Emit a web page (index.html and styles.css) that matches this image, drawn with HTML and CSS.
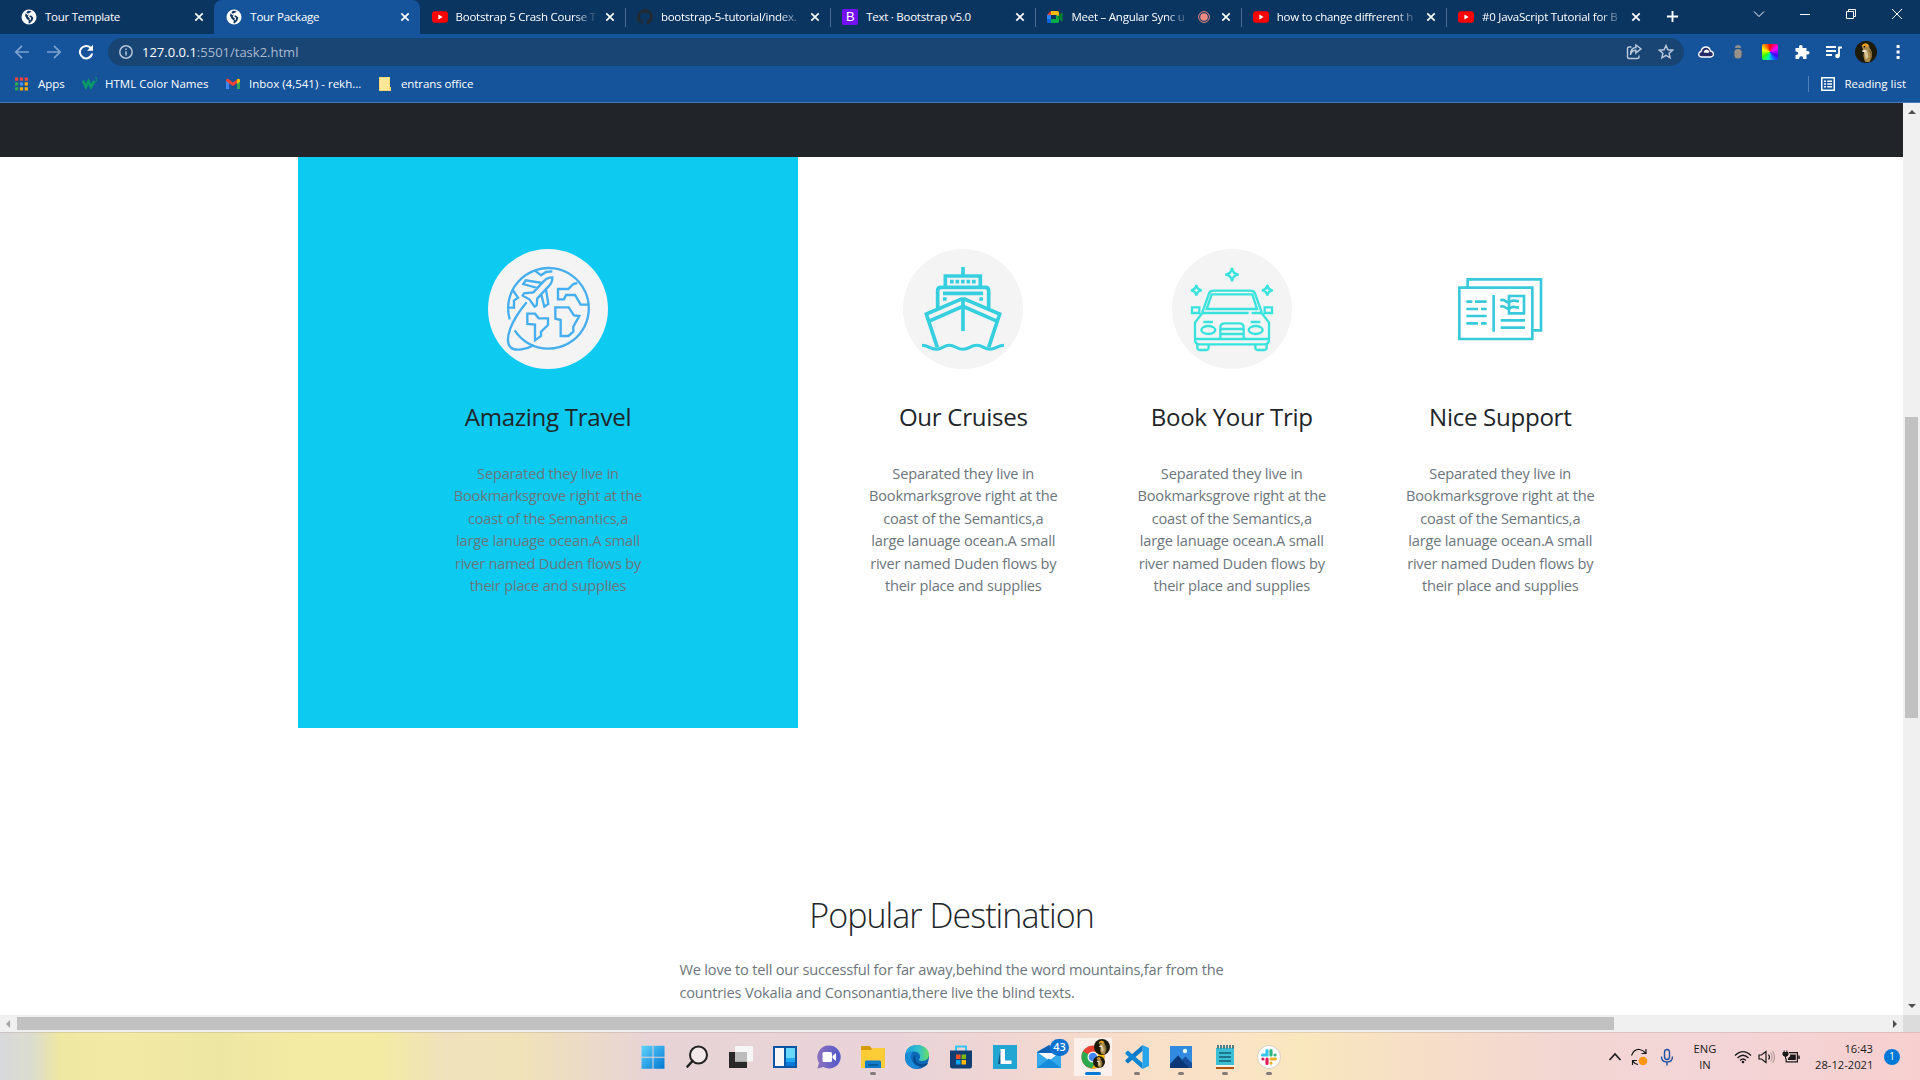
FILE: index.html
```html
<!DOCTYPE html>
<html lang="en">
<head>
<meta charset="utf-8">
<title>Tour Package</title>
<link rel="stylesheet" href="styles.css">
</head>
<body>
<svg class="defs" aria-hidden="true">
  <symbol id="close" viewBox="0 0 16 16"><path d="M4.300 4.300l7.400 7.400M11.700 4.300l-7.400 7.400" stroke="#fff" stroke-width="1.700"/></symbol>
  <symbol id="globe" viewBox="0 0 16 16"><circle cx="8" cy="8" r="7.500" fill="#fff"/><path d="M7 1.800l3.500.4-.8 2-2 .8-.5 1.600H10l2.300 2-.8 3-3 3-1-.5.3-2.600L5.600 9.800 4 6.500l1-3z" fill="#12365f"/><path d="M4.500 3l2 2.500 3-1.500-2 3.500 2 1.500-.5 2" fill="none" stroke="#fff" stroke-width="1.200"/></symbol>
  <symbol id="youtube" viewBox="0 0 16 16"><rect y="2.300" width="16" height="11.400" rx="3" fill="#f00"/><path d="M6.400 5.600v4.800L10.600 8z" fill="#fff"/></symbol>
  <symbol id="bird" viewBox="0 0 22 22"><circle cx="11" cy="11" r="11" fill="#1c1a08"/><path d="M7 6q1-4 4.500-3.500 3 .5 3 4.500 3 3.500 2.500 8.500L14.500 21h-4Q7.500 16 9 11z" fill="#a98b4c"/><path d="M6.500 5q2-3.500 6-2l1 2.500-3.500.5z" fill="#f1a21c"/><path d="M8.500 8.500l3.500 1 1.500 6-2.500 3-1-4z" fill="#d9c79a"/><path d="M7 9.500l4-.5-.5 1.800-3 .2z" fill="#f4f1e6"/><path d="M14.500 9q2.500 4 1.500 9" stroke="#6d5728" fill="none"/><circle cx="9.500" cy="5.600" r=".9" fill="#111"/></symbol>
</svg>

<header class="chrome">
  <div class="tabstrip">
    <div class="tab"><svg class="fav"><use href="#globe"/></svg><span class="label">Tour Template</span><svg class="x"><use href="#close"/></svg></div>
    <div class="tab active"><svg class="fav"><use href="#globe"/></svg><span class="label">Tour Package</span><svg class="x"><use href="#close"/></svg></div>
    <div class="tab"><svg class="fav"><use href="#youtube"/></svg><span class="label fade">Bootstrap 5 Crash Course T</span><svg class="x"><use href="#close"/></svg></div>
    <div class="tab sep"><svg class="fav" viewBox="0 0 16 16"><path fill="#24292e" d="M8 0a8 8 0 0 0-2.500 15.600c.4.100.5-.2.5-.4v-1.400c-2.200.5-2.700-1-2.700-1-.4-.9-.9-1.200-.9-1.200-.7-.5.100-.5.100-.5.800.1 1.200.8 1.200.8.700 1.200 1.900.9 2.300.7.100-.5.300-.9.500-1.100-1.800-.2-3.600-.9-3.600-4 0-.9.300-1.600.8-2.100-.1-.2-.4-1 .1-2.100 0 0 .7-.2 2.200.8a7.500 7.500 0 0 1 4 0c1.500-1 2.200-.8 2.200-.8.4 1.100.2 1.900.1 2.100.5.6.8 1.300.8 2.100 0 3.100-1.900 3.700-3.700 3.900.3.300.6.8.6 1.500v2.200c0 .2.100.5.500.4A8 8 0 0 0 8 0z"/></svg><span class="label fade">bootstrap-5-tutorial/index.</span><svg class="x"><use href="#close"/></svg></div>
    <div class="tab sep"><span class="fav bs">B</span><span class="label">Text · Bootstrap v5.0</span><svg class="x"><use href="#close"/></svg></div>
    <div class="tab sep"><svg class="fav" viewBox="0 0 16 16"><path d="M4 2v4H0z" fill="#ea4335"/><path d="M0 6h4v4H0z" fill="#2684fc"/><path d="M0 10h4v4H1.200Q0 14 0 12.800z" fill="#0066da"/><path d="M4 2h6.500Q12 2 12 3.500V8L9 6H4z" fill="#ffba00"/><path d="M4 10h5V6l3 2v4.500q0 1.500-1.500 1.500H4z" fill="#00ac47"/><path d="M12 6l2.500-2.200Q15.500 3.200 15.500 4v8q0 .8-1 .2L12 10l-1.500-2z" fill="#00832d"/></svg><span class="label fade">Meet – Angular Sync u</span><svg class="rec" viewBox="0 0 12 12"><circle cx="6" cy="6" r="5.400" fill="none" stroke="#f28b82"/><circle cx="6" cy="6" r="3.800" fill="#f28b82"/></svg><svg class="x"><use href="#close"/></svg></div>
    <div class="tab sep"><svg class="fav"><use href="#youtube"/></svg><span class="label fade">how to change diffrerent h</span><svg class="x"><use href="#close"/></svg></div>
    <div class="tab sep"><svg class="fav"><use href="#youtube"/></svg><span class="label fade">#0 JavaScript Tutorial for B</span><svg class="x"><use href="#close"/></svg></div>
    <div class="newtab"><svg viewBox="0 0 14 14"><path d="M7 1v12M1 7h12" stroke="#fff" stroke-width="2"/></svg></div>
    <div class="winbtns">
      <svg viewBox="0 0 12 12"><path d="M1 3.500l5 5 5-5" class="wl"/></svg>
      <svg viewBox="0 0 12 12"><path d="M1 6.500h10" class="wl"/></svg>
      <svg viewBox="0 0 12 12"><path d="M1.500 3.500h7v7h-7zM3.500 3.500v-2h7v7h-2" class="wl"/></svg>
      <svg viewBox="0 0 12 12"><path d="M1 1l10 10M11 1L1 11" class="wl"/></svg>
    </div>
  </div>

  <div class="toolbar">
    <svg class="nav dim" viewBox="0 0 16 16"><path d="M15 8H2M8 1.800L1.800 8 8 14.200"/></svg>
    <svg class="nav dim" viewBox="0 0 16 16"><path d="M1 8h13M8 1.800L14.200 8 8 14.200"/></svg>
    <svg class="nav" viewBox="0 0 16 16"><path d="M13.200 4.600A6.200 6.200 0 1 0 14.200 9.500"/><path d="M15 .800v6H9z" fill="#fff" stroke="none"/></svg>
    <div class="omnibox">
      <svg class="info" viewBox="0 0 14 14"><circle cx="7" cy="7" r="6.200"/><path d="M7 6.200v4.200M7 3.400v1.500"/></svg>
      <span class="url"><b>127.0.0.1</b>:5501/task2.html</span>
      <svg class="act" viewBox="0 0 16 16"><path d="M5.500 3H3Q1.500 3 1.500 4.500v8.500Q1.500 14.500 3 14.500h8.500q1.500 0 1.500-1.500v-1.500M4.500 11Q5 6.500 9.800 6.200V9L15 4.800 9.800 1v2.500Q4.500 4 4.500 11z"/></svg>
      <svg class="act" viewBox="0 0 16 16"><path d="M8 1.500l1.900 4.300 4.700.4-3.500 3.100 1 4.600L8 11.400l-4.100 2.500 1-4.600-3.500-3.100 4.700-.4z"/></svg>
    </div>
    <div class="exts">
      <svg viewBox="0 0 16 16"><path d="M3.500 13Q.5 12.500.7 10 1 8 3 7.500 4 3 8 3q3.500 0 4.500 4 3 .5 3 3.200 0 2.300-3 2.800z" fill="#262a66" stroke="#fff" stroke-width="1.300"/><path d="M5.500 8q1-2.500 3-2.500T11.500 8l-1 .8h-4z" fill="#fff"/></svg>
      <svg viewBox="0 0 16 16"><path d="M5 4q0-3 3-3t3 3z" fill="#8d8d8d"/><rect x="4.300" y="5" width="7.400" height="9.500" rx="3.500" fill="#989288"/><path d="M2.500 5L5 6.500M13.500 5L11 6.500M2 10h2.500M14 10h-2.500M3 14l2-1.500M13 14l-2-1.500" stroke="#3e5269"/></svg>
      <span class="wheel"></span>
      <svg viewBox="0 0 16 16"><path d="M1.500 4h3.700Q4.500 1 6.800 1T8.500 4H12.500v3.300Q15.500 6.500 15.500 8.800T12.500 10.300V15H9Q9.500 12.300 7.200 12.300T5.200 15H1.500v-3.900Q4.200 11.300 4.200 9.300T1.500 7.500z" fill="#fff"/></svg>
      <svg viewBox="0 0 16 16"><path d="M0 3h10M0 7h10M0 11h6M13 12V3.500h3" stroke="#fff" stroke-width="1.800" fill="none"/><circle cx="11.500" cy="12" r="2.300" fill="#fff"/></svg>
      <svg class="avatar"><use href="#bird"/></svg>
      <svg viewBox="0 0 16 16"><path d="M6.600 1h3v3h-3zM6.600 6.500h3v3h-3zM6.600 12h3v3h-3z" fill="#fff"/></svg>
    </div>
  </div>

  <div class="bookmarks">
    <span class="bm apps"><svg viewBox="0 0 14 14"><path d="M0 0h3.500v3.500H0zM5.200 0h3.500v3.500H5.200zM10.400 0h3.500v3.500h-3.500z" fill="#f4443b"/><path d="M0 5.200h3.500v3.500H0z" fill="#32a853"/><path d="M5.200 5.200h3.500v3.500H5.200z" fill="#4a8af4"/><path d="M10.400 5.200h3.500v3.500h-3.500z" fill="#fbad05"/><path d="M0 10.400h3.500v3.500H0z" fill="#32a853"/><path d="M5.200 10.400h3.500v3.500H5.200zM10.400 10.400h3.500v3.500h-3.500z" fill="#fbad05"/></svg>Apps</span>
    <span class="bm w3"><svg viewBox="0 0 16 14"><path d="M1 3.500l3 6.500 2.500-5.500L9 10l3.300-6" stroke="#0a9a6a" stroke-width="2.800" fill="none"/><path d="M12.500.800h2.600l-1.300 1.500q1.500.2 1 1.700-.8 1-2.300.2" stroke="#0a9a6a" stroke-width=".8" fill="none"/></svg>HTML Color Names</span>
    <span class="bm gm"><svg viewBox="0 0 14 14"><path d="M0 4v8h3V5.500z" fill="#4285f4"/><path d="M11 5.500V12h3V4z" fill="#34a853"/><path d="M0 4V2.800Q1 1 2.500 2L7 5.500 11.500 2l-.5 4-4 3.200L0 4z" fill="#ea4335"/><path d="M11 2.300Q13.500.8 14 3v1.500L11 7z" fill="#fbbc04"/></svg>Inbox (4,541) - rekh...</span>
    <span class="bm fo"><svg viewBox="0 0 12 14"><path d="M0 0h11v10h1v4H0z" fill="#f8d977"/><path d="M1 1h9v9.500L9 13H1z" fill="#ffe79a"/></svg>entrans office</span>
    <span class="bm reading"><svg viewBox="0 0 14 14"><path d="M.8.800h12.400v12.400H.800zM3 4.200h2M6.200 4.200H11M3 7h2M6.200 7H11M3 9.800h2M6.200 9.800H11" stroke="#fff" stroke-width="1.500" fill="none"/></svg>Reading list</span>
  </div>
</header>

<main class="viewport">
  <div class="page">
    <div class="darkband"></div>
    <section class="features">
      <article class="card lead">
        <svg class="pic disc" viewBox="144 57 360 360" stroke="#45aeef" stroke-width="7"><path d="M209 268A121 121 0 1 1 224 301M260 217C215 270 190 330 212 352C225 365 260 358 282 345"/><path d="M337 142Q322 142 313 152L280 187L252 190L248 197L268 208L284 230L290 226L292 205L325 170Q338 157 337 142ZM292 174L250 162L257 151L307 159M303 190L313 230L325 222L318 178"/><path d="M262 251H285L296 265H324V285L303 305V318L285 331V284L262 282ZM346 232H386L402 256L418 258L400 290V305L385 318H362V270L346 266ZM412 159L400 162L385 177H354V208H372L378 195H405L422 224H445M218 180L234 203L222 212V233H203M285 122L303 136L318 126L337 124"/></svg>
        <h2>Amazing Travel</h2>
        <p>Separated they live in<br>Bookmarksgrove right at the<br>coast of the Semantics,a<br>large lanuage ocean.A small<br>river named Duden flows by<br>their place and supplies</p>
      </article>
      <article class="card">
        <svg class="pic disc" viewBox="129 57 360 360" stroke="#36cfe0" stroke-width="11"><path d="M309 111V135M256 170V138H361V170M233 236V182Q233 172 243 172H376Q386 172 386 182V236M249 190H369M309 205L199 252L232 352M309 205L419 252L386 352M206 274L309 229L412 274M309 205V303"/><path d="M270 155H347" stroke-dasharray="11 5.500"/><path d="M249 207H260M358 207H369"/><path d="M186 346C206 346 210 358 228 358S250 346 268 346 290 358 309 358 330 346 350 346 372 358 390 358 412 346 432 346" stroke-width="9"/></svg>
        <h2>Our Cruises</h2>
        <p>Separated they live in<br>Bookmarksgrove right at the<br>coast of the Semantics,a<br>large lanuage ocean.A small<br>river named Duden flows by<br>their place and supplies</p>
      </article>
      <article class="card">
        <svg class="pic disc" viewBox="933 57 360 360" stroke="#37e3dc" stroke-width="7"><path d="M1024 247L1044 190Q1048 182 1058 182H1168Q1178 182 1182 190L1202 247M1052 193H1174L1188 237H1037ZM1022 249H1163M1172 249H1204M1024 249L1002 278V328Q1002 343 1014 343H1212Q1224 343 1224 328V278L1202 249M1002 327H1224M1009 343V352Q1009 360 1016 360H1036Q1043 360 1043 352V343M1183 343V352Q1183 360 1190 360H1210Q1217 360 1217 352V343M993 232H1015V249H993ZM1211 232H1233V249H1211ZM1027 276H1056M1169 276H1198M1078 327V292Q1078 280 1092 280H1134Q1148 280 1148 292V327M1078 297H1148M1078 312H1148"/><ellipse cx="1042" cy="300" rx="21" ry="12"/><ellipse cx="1184" cy="300" rx="21" ry="12"/><path d="M1113 114Q1115 132 1133 134Q1115 136 1113 154Q1111 136 1093 134Q1111 132 1113 114ZM1006 165Q1008 179 1022 181Q1008 183 1006 197Q1004 183 990 181Q1004 179 1006 165ZM1219 165Q1221 179 1235 181Q1221 183 1219 197Q1217 183 1203 181Q1217 179 1219 165Z"/></svg>
        <h2>Book Your Trip</h2>
        <p>Separated they live in<br>Bookmarksgrove right at the<br>coast of the Semantics,a<br>large lanuage ocean.A small<br>river named Duden flows by<br>their place and supplies</p>
      </article>
      <article class="card">
        <svg class="pic" viewBox="240 57 360 360" stroke="#38c9da" stroke-width="8"><path d="M323 171V148H543V301H520M298 173H517V327H298ZM401 195V305M319 215H337M345 215H380M319 237H354M363 237H380M319 258H380M319 280H354M363 280H380M447 198H492V250H447ZM422 271H495M422 293H495"/><path d="M421 212Q430 207 436 213T450 215 463 212 477 214M421 231Q430 226 436 232T450 234 463 231 477 233"/></svg>
        <h2>Nice Support</h2>
        <p>Separated they live in<br>Bookmarksgrove right at the<br>coast of the Semantics,a<br>large lanuage ocean.A small<br>river named Duden flows by<br>their place and supplies</p>
      </article>
    </section>
    <section class="popular">
      <h1>Popular Destination</h1>
      <p>We love to tell our successful for far away,behind the word mountains,far from the<br>countries Vokalia and Consonantia,there live the blind texts.</p>
    </section>
  </div>
  <div class="vbar"><i class="up"></i><span class="vthumb"></span><i class="down"></i></div>
  <div class="hbar"><i class="left"></i><span class="hthumb"></span><i class="right"></i></div>
  <div class="corner"></div>
</main>

<footer class="taskbar">
  <div class="apps-row">
    <span class="app"><svg viewBox="0 0 24 24"><defs><linearGradient id="win" x2="1" y2="1"><stop stop-color="#5fd3fb"/><stop offset="1" stop-color="#0377d4"/></linearGradient></defs><path d="M.5.800h11v11H.500zM12.500.800h11v11h-11zM.5 12.800h11v11H.500zM12.500 12.800h11v11h-11z" fill="url(#win)"/></svg></span>
    <span class="app"><svg viewBox="0 0 24 24"><circle cx="13.500" cy="10" r="8.500" fill="#f3e8ea" stroke="#222" stroke-width="2"/><path d="M7.500 16L2.500 21.500" stroke="#222" stroke-width="2.600" stroke-linecap="round"/></svg></span>
    <span class="app"><svg viewBox="0 0 24 24"><path d="M0 7h18v16H0z" fill="#292929"/><path d="M6 1h18v15.500H6z" fill="#f6f6f6"/><path d="M6 7h12v9.500H6z" fill="#bdbdbd"/></svg></span>
    <span class="app"><svg viewBox="0 0 24 24"><path d="M0 1h24v22H0z" fill="#0a56a4"/><path d="M2 3h9v18H2z" fill="#f6f6f6"/><path d="M13 3h9v10h-9z" fill="#69d8ff"/><path d="M13 13h9v4h-9z" fill="#20a8f4"/><path d="M13 17h9v4h-9z" fill="#0a78d8"/></svg></span>
    <span class="app"><svg viewBox="0 0 24 24"><defs><linearGradient id="chat" x1="0" x2="1"><stop stop-color="#8d72bd"/><stop offset="1" stop-color="#5059c9"/></linearGradient></defs><path d="M12 .500a11.500 11.500 0 1 1-5.500 21.500L.5 23.500l1.500-5.500A11.500 11.500 0 0 1 12 .500z" fill="url(#chat)"/><rect x="5.500" y="7" width="9.500" height="10" rx="1.500" fill="#fff"/><path d="M15.500 11l3.500-3v8l-3.500-3z" fill="#fff"/></svg></span>
    <span class="app run"><svg viewBox="0 0 24 24"><path d="M0 2q0-1 1-1h8l2 3v4H0z" fill="#d79a0a"/><path d="M0 5h10l2-2h12v19q0 1-1 1H1q-1 0-1-1z" fill="#fccb38"/><path d="M4 23v-6q0-1.500 1.500-1.500h13Q20 15.500 20 17v6z" fill="#0f7bc9"/><path d="M7 19h10v2H7z" fill="#075a9c"/></svg></span>
    <span class="app"><svg viewBox="0 0 24 24"><defs><linearGradient id="edge" x1="0" x2="1"><stop stop-color="#1a9ee0"/><stop offset=".6" stop-color="#35c1c9"/><stop offset="1" stop-color="#6ae05e"/></linearGradient></defs><circle cx="12" cy="12" r="12" fill="#0c68b8"/><path d="M0 11Q1 0 12 0q11 .5 12 9.500 0 6.500-7 6.500-3.500 0-3-2 1.500-1 1-3.500Q13.500 6.500 8.500 6.500 2 7 0 11z" fill="url(#edge)"/><path d="M0 12Q2 6.500 8 6.500q-3 4-1.500 8.500 2 5.500 8.500 6.500-3 3-7 1.500Q0 20 0 12z" fill="#188ad6"/><path d="M11 10q-2 4 1 7.500 4 3.500 10.500.5l.5.500Q20 23 15 21.500 7 19 8.500 12z" fill="#064a8c"/></svg></span>
    <span class="app"><svg viewBox="0 0 24 24"><path d="M7 6V1.500h10V6" fill="none" stroke="#35c4f3" stroke-width="2"/><path d="M1 5.500h22V21q0 2.500-2.500 2.500h-17Q1 23.500 1 21z" fill="#123f73"/><path d="M7 9.500h4.500V14H7z" fill="#f25022"/><path d="M12.500 9.500H17V14h-4.500z" fill="#7fba00"/><path d="M7 15h4.500v4.500H7z" fill="#00a4ef"/><path d="M12.500 15H17v4.500h-4.500z" fill="#ffb900"/></svg></span>
    <span class="app"><svg viewBox="0 0 24 24"><path d="M0 0h24v24H0z" fill="#21a5d3"/><path d="M5 19L7.500 4v11.500L18 19z" fill="#10507c"/><path d="M7.500 4H12v11.500h6.500V19h-11z" fill="#fff"/></svg></span>
    <span class="app"><svg viewBox="0 0 24 24"><path d="M0 7L12 0l12 7v6H0z" fill="#0d62b5"/><path d="M1 8h22L12 16z" fill="#fff"/><path d="M0 7l12 8.500L24 7v16H0z" fill="#36a9ec"/><path d="M0 23L12 13.500 24 23z" fill="#168bd9"/></svg><b class="badge">43</b></span>
    <span class="app run current"><svg viewBox="0 0 24 24"><circle cx="12" cy="12" r="11.500" fill="#e94235"/><path d="M2 6.300A11.500 11.500 0 0 0 11 23.500L15.500 16 12 12z" fill="#2da94f"/><path d="M22.500 7.500A11.500 11.500 0 0 1 11 23.500L16.500 14 13 7.500z" fill="#fdbd00"/><circle cx="12" cy="12" r="5.500" fill="#fff"/><circle cx="12" cy="12" r="4.300" fill="#4285f4"/></svg><svg class="who big"><use href="#bird"/></svg><svg class="who small"><use href="#bird"/></svg></span>
    <span class="app run"><svg viewBox="0 0 24 24"><path d="M17.500 0L24 3v18l-6.500 3z" fill="#27a4ee"/><path d="M17.500 0v6L3 18.500.5 16.500v-1.500z" fill="#0a79c7"/><path d="M17.500 24v-6L3 5.500.5 7.500V9z" fill="#0e86d4"/></svg></span>
    <span class="app run"><svg viewBox="0 0 24 24"><path d="M1 1h22v22H1z" fill="#2f8ae0"/><path d="M1 19L9 10.500 21 23H1z" fill="#0b3776"/><path d="M13 15l3.500-3.500L23 18v5h-2.500z" fill="#174e9b"/><circle cx="16" cy="6" r="2.200" fill="#e5f6ff"/></svg></span>
    <span class="app run"><svg viewBox="0 0 24 24"><path d="M3 21h18v3H3z" fill="#b3550e"/><path d="M3 3h18v18H3z" fill="#3bbfd6"/><path d="M3 20h18v2H3z" fill="#f7f2e8"/><path d="M5 0v3.500M8 0v3.500M11 0v3.500M14 0v3.500M17 0v3.500M20 0v3.500M6 8h12M6 12h12M6 16h12" stroke="#165c72" stroke-width="1.500"/></svg></span>
    <span class="app run"><svg viewBox="0 0 24 24"><circle cx="12" cy="12" r="11.500" fill="#fff" stroke="#d6ccc0"/><g stroke-width="3.200" stroke-linecap="round"><path d="M10 5.500v4.500H5.500" stroke="#36c5f0" fill="none"/><path d="M14 5.500V10M18 10h.100" stroke="#2eb67d"/><path d="M14 14h4.500M14 18v.100" stroke="#ecb22e"/><path d="M10 14v4.500M5.900 14H6" stroke="#e01e5a"/></g></svg></span>
  </div>
  <div class="tray">
    <svg class="t-up" viewBox="0 0 14 16"><path d="M1.500 11L7 5l5.500 6"/></svg>
    <svg class="t-sync" viewBox="0 0 18 18"><path d="M1.500 7.500Q4 1 9.500 1.500q3.500.5 6 3.500M16 1v4.500h-4.500M2.500 17v-4.500H7M2.500 12.500Q4.500 16 8 16.500"/><circle cx="13" cy="13" r="4.300" fill="#ff9610" stroke="none"/></svg>
    <svg class="t-mic" viewBox="0 0 14 18"><path d="M4.500 4.500Q4.500 1.500 7 1.500t2.500 3v4q0 3-2.500 3t-2.500-3zM1.500 8.500Q1.500 14 7 14t5.500-5.500M7 14v3.500" stroke="#1e50a2"/></svg>
    <span class="lang">ENG<br>IN</span>
    <svg class="t-wifi" viewBox="0 0 18 14"><path d="M1 5.500Q9-2.500 17 5.500M3.500 8Q9 2.500 14.500 8M6 10.500Q9 7.500 12 10.500"/><circle cx="9" cy="12" r="1.300" fill="#1a1a1a" stroke="none"/></svg>
    <svg class="t-vol" viewBox="0 0 18 14"><path d="M1 5h2.500L8 1.500v11L3.500 9H1zM10.500 4.500q2 2.500 0 5"/><path d="M12.500 2.500q3.500 4.500 0 9M14.500 1q4 6 0 12" stroke="#b5a0a0"/></svg>
    <svg class="t-bat" viewBox="0 0 18 14"><path d="M7 2.600h8.400v9.300H4.200V8.500"/><path d="M8 4.500h5.800v5.600H6V8l2-1.500z" fill="#1a1a1a" stroke="none"/><path d="M17 5.500v3.500" stroke-width="1.500"/><path d="M1 2.500h5v2.300q-.5 1.500-2.500 1.500T1 4.800zM2.200 2.500V.500M4.800 2.500V.500M3.500 6v3" fill="#1a1a1a" stroke-width="1"/></svg>
    <span class="clock">16:43<br>28-12-2021</span>
    <span class="notif">1</span>
  </div>
</footer>
</body>
</html>
```
FILE: styles.css
```css
* { box-sizing: border-box; }
body { margin: 0; width: 1920px; height: 1080px; overflow: hidden; display: flex; flex-direction: column; background: #fff; font-family: "Open Sans", "Noto Sans", sans-serif; color: #212529; }
svg { display: block; flex: none; }
.defs { display: none; }
h1, h2, p { margin: 0; }

/* browser frame */
.chrome { height: 103px; flex: none; background: #15539b; border-bottom: 1px solid #4779b3; color: #fff; }
.tabstrip { height: 34px; display: flex; background: #0b3561; padding-left: 9px; }
.tab { width: 205.3px; height: 34px; flex: none; display: flex; align-items: center; padding-left: 12px; position: relative; font-size: 11.5px; letter-spacing: -.25px; }
.tab.sep::before { content: ""; position: absolute; left: 0; top: 8px; width: 1px; height: 19px; background: #4d6d90; }
.tab.active { background: #15539b; border-radius: 8px 8px 0 0; }
.fav { width: 16px; height: 16px; margin-right: 8px; flex: none; }
.bs { background: #7410f5; border-radius: 2px; text-align: center; font: 13px/16px "Liberation Sans", sans-serif; }
.label { flex: 1 0 0; white-space: nowrap; line-height: 18px; padding-bottom: 1px; }
.fade { -webkit-mask-image: linear-gradient(90deg, #000 calc(100% - 24px), transparent); mask-image: linear-gradient(90deg, #000 calc(100% - 24px), transparent); }
.rec { width: 12px; height: 12px; margin-left: 8px; }
.x { width: 16px; height: 16px; margin: 0 7px 0 4px; }
.rec + .x { margin-left: 8px; }
.newtab { padding: 10px 0 0 15px; }
.newtab svg { width: 13px; height: 13px; }
.winbtns { margin-left: auto; display: flex; gap: 34px; padding: 8px 17px 0 0; }
.winbtns svg { width: 12px; height: 12px; }
.wl { fill: none; stroke: #fff; stroke-width: 1; }

.toolbar { height: 36px; display: flex; align-items: center; padding-left: 14px; }
.nav { width: 16px; height: 16px; margin-right: 16px; fill: none; stroke: #fff; stroke-width: 2; }
.nav.dim { stroke: #7ea3cf; stroke-width: 1.7; }
.omnibox { width: 1576px; height: 28px; margin-left: -2px; border-radius: 14px; background: #194575; display: flex; align-items: center; padding: 0 10px 0 11px; gap: 16px; }
.info { width: 14px; height: 14px; fill: none; stroke: #b5c5d8; stroke-width: 1.5; margin-right: -7px; }
.url { font-size: 13px; line-height: 18px; color: #a9bace; flex: 1; margin-top: -1px; }
.url b { font-weight: 400; color: #fff; }
.act { width: 16px; height: 16px; fill: none; stroke: #bccbdc; stroke-width: 1.4; }
.exts { display: flex; align-items: center; gap: 16px; margin-left: 14px; }
.exts svg { width: 16px; height: 16px; }
.exts .avatar { width: 22px; height: 22px; margin: 0 -3px; }
.wheel { width: 16px; height: 16px; border-radius: 2px; background: conic-gradient(#f00, #f0f, #40f 33%, #08f, #0fa 55%, #3f0 66%, #ff0 80%, #f00); }

.bookmarks { display: flex; align-items: center; height: 27px; padding-left: 15px; font-size: 11.5px; }
.bm { display: flex; align-items: center; white-space: nowrap; line-height: 16px; }
.apps svg { width: 13px; height: 14px; margin-right: 10px; }
.apps { width: 67px; }
.w3 svg { width: 16px; height: 14px; margin-right: 7px; }
.w3 { width: 144px; }
.gm svg { width: 14px; height: 14px; margin-right: 9px; }
.gm { width: 153px; }
.fo svg { width: 12px; height: 14px; margin-right: 10px; }
.fo { letter-spacing: -.1px; }
.reading { margin-left: auto; margin-right: 14px; border-left: 1px solid #4d7fb8; padding-left: 12px; }
.reading svg { width: 14px; height: 14px; margin-right: 9px; }

/* page */
.viewport { height: 929px; flex: none; display: grid; grid-template: 912px 17px / 1903px 17px; }
.page { overflow: hidden; background: #fff; }
.darkband { height: 54px; background: #212529; }
.features { display: grid; grid-template-columns: 500px 31px repeat(3, 268.5px); padding-left: 298px; height: 571px; }
.features .lead { grid-column: 1 / 2; background: #0dcaf0; }
.features .lead + .card { grid-column: 3; }
.card { padding-top: 92px; text-align: center; display: flex; flex-direction: column; align-items: center; }
.pic { width: 120px; height: 120px; fill: none; }
.disc { background: #f4f4f4; border-radius: 50%; }
.card h2 { margin: 33px 0 29.5px; font-size: 24.1px; font-weight: 400; line-height: 30px; letter-spacing: -.3px; white-space: nowrap; }
.card p, .popular p { font-size: 14.6px; line-height: 22.5px; letter-spacing: -.2px; color: #6c757d; white-space: nowrap; }
.popular { padding-top: 165px; text-align: center; display: flex; flex-direction: column; align-items: center; }
.popular h1 { font-size: 34px; font-weight: 300; line-height: 44px; letter-spacing: -.95px; }
.popular p { text-align: left; margin-top: 21px; }

/* scrollbars */
.vbar { background: #f0f0f0; display: flex; flex-direction: column; align-items: center; padding: 7px 0; }
.vthumb { width: 13px; height: 301px; margin-top: 303px; background: #c1c1c1; }
.hbar { background: #f0f0f0; display: flex; align-items: center; padding: 0 6px; }
.hthumb { width: 1597px; height: 13px; margin-left: 7px; background: #c1c1c1; }
.corner { background: #dcdcdc; }
.vbar i, .hbar i { width: 0; height: 0; border: 4px solid transparent; flex: none; }
.vbar .up { border-top: 0; border-bottom-color: #505050; }
.vbar .down { border-bottom: 0; border-top-color: #505050; margin-top: auto; }
.hbar .left { border-left: 0; border-right-color: #a3a3a3; }
.hbar .right { border-right: 0; border-left-color: #505050; margin-left: auto; }

/* taskbar */
.taskbar { height: 48px; flex: none; display: flex; align-items: center; border-top: 1px solid rgba(150, 120, 110, .2); background: linear-gradient(90deg, #d8d9db 0, #dbdccf 32px, #eee7a2 60px, #f2eaa4 110px, #ede6a3 220px, #f4eba3 310px, #f3eba4 380px, #efe1bb 445px, #f0e2b8 520px, #ebdac8 590px, #e7d3d6 650px, #e9d3d8 900px, #f0d6d3 1010px, #f8dec8 1130px, #fae3c6 1230px, #f9e7bd 1300px, #f6dfc6 1410px, #f2d6d2 1560px, #f3d5d7 1700px, #f7cfcf 1920px); }
.apps-row { display: flex; margin-left: 631px; }
.app { width: 44px; height: 47px; display: flex; align-items: center; justify-content: center; position: relative; }
.app > svg { width: 24px; height: 24px; }
.app.run::after { content: ""; position: absolute; bottom: 5px; left: 19px; width: 6px; height: 3px; border-radius: 2px; background: #857b79; }
.app.current { background: linear-gradient(#fbf0ec, #fbf0ec) center / 38px 38px no-repeat; border-radius: 4px; }
.app.current::after { width: 16px; left: 14px; background: #0b78d4; }
.badge { position: absolute; left: 23px; top: 6px; width: 19px; height: 17px; border-radius: 9px; background: #0b72cf; color: #fff; font-size: 11px; font-weight: 600; line-height: 16px; text-align: center; }
.app > .who { position: absolute; }
.app > .who.big { width: 16px; height: 16px; left: 23px; top: 6px; }
.app > .who.small { width: 12px; height: 12px; left: 22px; top: 23px; }
.tray { margin-left: auto; display: flex; align-items: center; padding-right: 20px; font-size: 11.2px; line-height: 16px; color: #1a1a1a; }
.tray svg { fill: none; stroke: #1a1a1a; stroke-width: 1.2; }
.t-up { width: 14px; height: 16px; margin-right: 8px; }
.tray .t-up { stroke-width: 1.6; }
.t-sync { width: 18px; height: 18px; margin-right: 12px; }
.t-mic { width: 14px; height: 18px; margin-right: 19px; }
.tray .t-mic { stroke-width: 1.4; }
.lang { width: 24px; text-align: center; margin-right: 17px; }
.t-wifi { width: 18px; height: 14px; margin-right: 6px; }
.t-vol { width: 18px; height: 14px; margin-right: 6px; }
.t-bat { width: 18px; height: 14px; margin-right: 15px; }
.clock { text-align: right; width: 58px; white-space: nowrap; margin-right: 11px; }
.notif { width: 16px; height: 16px; border-radius: 50%; background: #0078d7; color: #fff; text-align: center; font-size: 10.5px; line-height: 15px; }
```
